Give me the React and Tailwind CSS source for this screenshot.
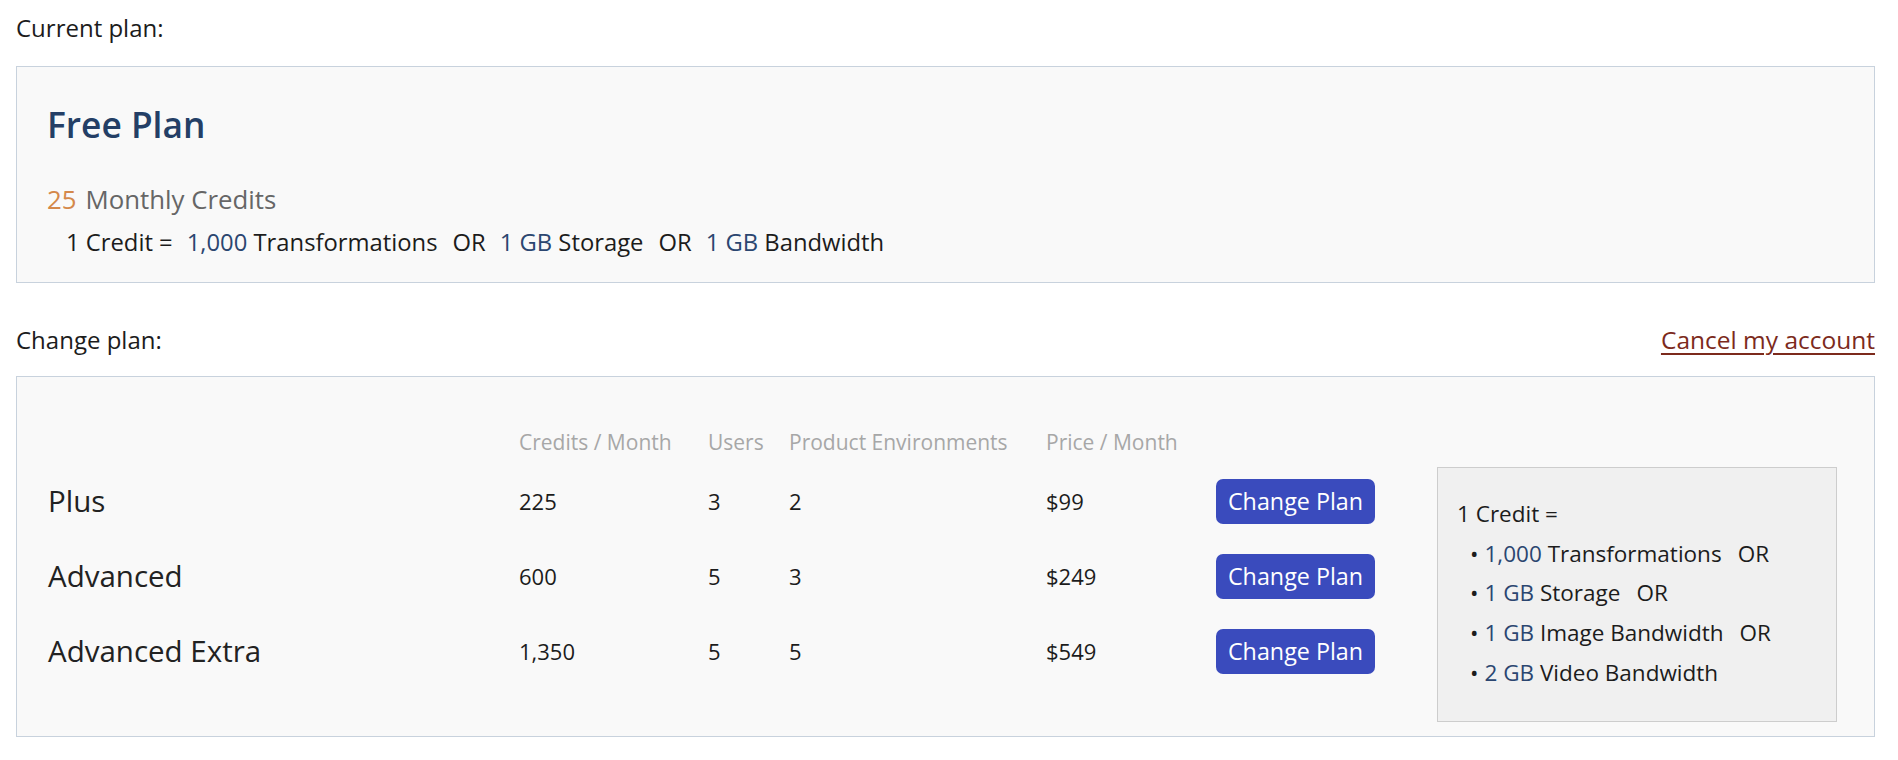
const plans = [
  { name: "Plus", credits: "225", users: "3", envs: "2", price: "$99" },
  { name: "Advanced", credits: "600", users: "5", envs: "3", price: "$249" },
  { name: "Advanced Extra", credits: "1,350", users: "5", envs: "5", price: "$549" },
];

const creditItems = [
  { amount: "1,000", label: "Transformations", or: true },
  { amount: "1 GB", label: "Storage", or: true },
  { amount: "1 GB", label: "Image Bandwidth", or: true },
  { amount: "2 GB", label: "Video Bandwidth", or: false },
];

export default function App() {
  return (
    <div className="min-h-screen bg-white font-['Open_Sans',sans-serif] text-[#1c1c1c]">
      <div className="ml-[16px] w-[1859px]">
        {/* Current plan */}
        <div className="pt-[10px] pb-[21px] text-[24px] leading-[35px]">Current plan:</div>

        <div className="h-[217px] border border-[#c8d2dd] bg-[#f9f9f9] pl-[30px] pt-[35px]">
          <h2 className="text-[35.3px] leading-[44px] font-semibold text-[#243f66]">Free Plan</h2>
          <div className="mt-[35px] text-[25.8px] leading-[36px] text-[#666666]">
            <span className="text-[#d4884a]">25</span>
            <span className="ml-[9px]">Monthly Credits</span>
          </div>
          <div className="mt-[7px] pl-[19px] text-[23.8px] leading-[36px]">
            <span>1 Credit =</span>
            <span className="ml-[14px] text-[#2b4670]">1,000</span> Transformations
            <span className="ml-[15px]">OR</span>
            <span className="ml-[14px] text-[#2b4670]">1 GB</span> Storage
            <span className="ml-[15px]">OR</span>
            <span className="ml-[14px] text-[#2b4670]">1 GB</span> Bandwidth
          </div>
        </div>

        {/* Change plan */}
        <div className="mt-[39px] mb-[19px] flex items-baseline justify-between leading-[35px]">
          <span className="text-[24px]">Change plan:</span>
          <a href="#" className="text-[24.5px] text-[#7c2a1c] underline underline-offset-[4px]">
            Cancel my account
          </a>
        </div>

        <div className="flex items-start border border-[#c8d2dd] bg-[#f9f9f9] pl-[32px] pr-[37px]">
          <div className="pt-[45px]">
            <div className="grid h-[42px] grid-cols-[470px_189px_81px_257px_170px_159px] items-center text-[21px] text-[#a7a7a7]">
              <span />
              <span>Credits / Month</span>
              <span>Users</span>
              <span>Product Environments</span>
              <span>Price / Month</span>
              <span />
            </div>
            {plans.map((p) => (
              <div
                key={p.name}
                className="grid h-[75px] grid-cols-[470px_189px_81px_257px_170px_159px] items-center text-[22px]"
              >
                <span className="-ml-[1px] text-[29.5px] text-[#222222]">{p.name}</span>
                <span>{p.credits}</span>
                <span>{p.users}</span>
                <span>{p.envs}</span>
                <span>{p.price}</span>
                <button className="h-[45px] w-[159px] rounded-[7px] bg-[#3a4bbd] text-[23.3px] font-medium text-white">
                  Change Plan
                </button>
              </div>
            ))}
          </div>

          <div className="ml-[62px] mt-[90px] mb-[14px] h-[255px] w-[400px] border border-[#cdcdcd] bg-[#f0f0f0] pl-[19px] pt-[26px] text-[22.5px] leading-[39.7px]">
            <div>1 Credit =</div>
            {creditItems.map((c, i) => (
              <div key={i} className="pl-[13px]">
                <span className="mr-[6px]">•</span>
                <span className="text-[#2b4670]">{c.amount}</span> {c.label}
                {c.or && <span className="ml-[16px]">OR</span>}
              </div>
            ))}
          </div>
        </div>
      </div>
    </div>
  );
}
